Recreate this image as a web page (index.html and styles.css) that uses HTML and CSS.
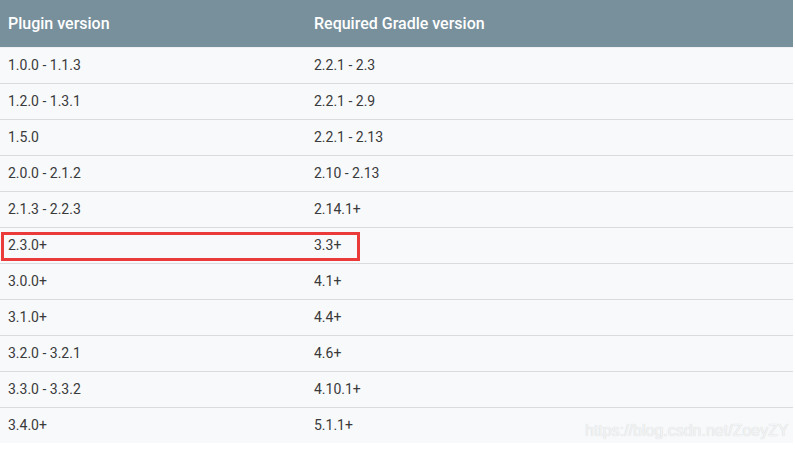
FILE: index.html
```html
<!DOCTYPE html>
<html>
<head>
<meta charset="utf-8">
<link rel="stylesheet" href="styles.css">
</head>
<body>
<div class="sheet">
  <table class="versions">
    <thead>
      <tr><th class="col-plugin">Plugin version</th><th>Required Gradle version</th></tr>
    </thead>
    <tbody>
      <tr><td>1.0.0 - 1.1.3</td><td>2.2.1 - 2.3</td></tr>
      <tr><td>1.2.0 - 1.3.1</td><td>2.2.1 - 2.9</td></tr>
      <tr><td>1.5.0</td><td>2.2.1 - 2.13</td></tr>
      <tr><td>2.0.0 - 2.1.2</td><td>2.10 - 2.13</td></tr>
      <tr><td>2.1.3 - 2.2.3</td><td>2.14.1+</td></tr>
      <tr><td>2.3.0+</td><td>3.3+</td></tr>
      <tr><td>3.0.0+</td><td>4.1+</td></tr>
      <tr><td>3.1.0+</td><td>4.4+</td></tr>
      <tr><td>3.2.0 - 3.2.1</td><td>4.6+</td></tr>
      <tr><td>3.3.0 - 3.3.2</td><td>4.10.1+</td></tr>
      <tr><td>3.4.0+</td><td>5.1.1+</td></tr>
    </tbody>
  </table>
  <div class="highlight"></div>
  <div class="watermark">https://blog.csdn.net/ZoeyZY</div>
</div>
</body>
</html>
```
FILE: styles.css
```css
html, body {
  margin: 0;
  padding: 0;
  background: #ffffff;
}

.sheet {
  position: relative;
  width: 795px;
  height: 450px;
  font-family: Roboto, "Liberation Sans", sans-serif;
}

.versions {
  width: 793px;
  border-collapse: collapse;
  table-layout: fixed;
}

.versions th {
  background: #78909c;
  color: #ffffff;
  font-size: 16px;
  font-weight: 500;
  text-align: left;
  height: 47px;
  padding: 0 8px;
  box-sizing: border-box;
  vertical-align: middle;
}

.versions .col-plugin {
  width: 306px;
}

.versions td {
  background: #f8f9fa;
  color: #3a3a3a;
  font-size: 14px;
  height: 36px;
  padding: 0 8px;
  box-sizing: border-box;
  border-top: 1px solid #dadce0;
  vertical-align: middle;
}

.versions tbody tr:first-child td {
  border-top-color: #eef0f2;
}

.highlight {
  position: absolute;
  left: 1px;
  top: 232px;
  width: 359px;
  height: 29px;
  box-sizing: border-box;
  border: 3px solid #ea3a3a;
}

.watermark {
  position: absolute;
  left: 585px;
  top: 422px;
  font-family: "Liberation Sans", Arial, sans-serif;
  font-size: 16px;
  color: #f3f4f5;
  text-shadow: 0 0 1px #c9ccd0;
  white-space: nowrap;
}
```
